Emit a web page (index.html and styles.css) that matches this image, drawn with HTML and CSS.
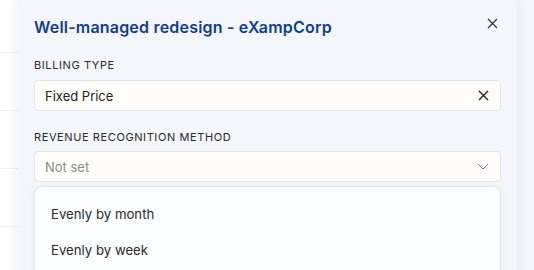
FILE: index.html
```html
<!DOCTYPE html>
<html lang="en">
<head>
    <meta charset="UTF-8">
    <meta name="viewport" content="width=device-width, initial-scale=1.0">
    <title>Well-managed redesign - eXampCorp</title>
    <link rel="stylesheet" href="styles.css">
</head>
<body>
    <div class="backdrop">
        <div class="rows">
            <div class="row"></div>
            <div class="row"></div>
            <div class="row"></div>
            <div class="row"></div>
            <div class="row"></div>
        </div>
    </div>

    <div class="panel">
        <div class="panel-head">
            <h1>Well-managed redesign - eXampCorp</h1>
            <button class="icon-btn close-btn" aria-label="Close">
                <svg width="11" height="11" viewBox="0 0 11 11"><path d="M1 1L10 10M10 1L1 10" stroke="#333" stroke-width="1.2" fill="none"/></svg>
            </button>
        </div>

        <div class="field">
            <label>Billing type</label>
            <div class="input">
                <span>Fixed Price</span>
                <svg width="11" height="11" viewBox="0 0 11 11"><path d="M1 1L10 10M10 1L1 10" stroke="#222" stroke-width="1.4" fill="none"/></svg>
            </div>
        </div>

        <div class="field">
            <label>Revenue recognition method</label>
            <div class="input">
                <span class="placeholder">Not set</span>
                <svg width="12" height="7" viewBox="0 0 12 7"><path d="M1 1L6 6L11 1" stroke="#777" stroke-width="1" fill="none"/></svg>
            </div>
            <ul class="menu">
                <li>Evenly by month</li>
                <li>Evenly by week</li>
            </ul>
        </div>
    </div>
</body>
</html>
```

FILE: styles.css
```css
html, body {
    margin: 0;
    height: 100%;
    overflow: hidden;
}
body {
    font-family: Inter, "Noto Sans", sans-serif;
    background: #f6f7fa;
    position: relative;
    color: #222;
}
.backdrop {
    position: absolute;
    left: 0;
    top: 0;
    width: 30px;
    height: 100%;
    background: #fff;
}
.rows {
    padding-top: 52px;
}
.row {
    height: 57px;
    border-top: 1px solid #eeeff2;
}
.panel {
    position: absolute;
    left: 18px;
    top: -8px;
    width: 499px;
    height: 300px;
    box-sizing: border-box;
    padding: 23px 16px 0 16px;
    background: #f4f6fb;
    border-radius: 12px;
    box-shadow: 0 0 14px rgba(30, 40, 70, 0.08);
}
.panel-head {
    display: flex;
    align-items: center;
    justify-content: space-between;
    height: 24px;
}
h1 {
    margin: 0;
    font-size: 16px;
    font-weight: 600;
    color: #0f3c93;
    letter-spacing: 0.2px;
}
.icon-btn {
    border: none;
    background: none;
    padding: 0;
    display: flex;
    cursor: pointer;
}
.close-btn {
    margin-right: 3px;
    margin-top: -7px;
}
.field {
    margin-top: 19px;
}
.field + .field {
    margin-top: 19px;
}
label {
    display: block;
    font-size: 11px;
    text-transform: uppercase;
    letter-spacing: 0.6px;
    color: #2a2a2a;
    margin-bottom: 8px;
}
.field + .field label {
    margin-bottom: 7px;
}
.input {
    display: flex;
    align-items: center;
    justify-content: space-between;
    height: 31px;
    box-sizing: border-box;
    padding: 0 11px 0 10px;
    background: #fffdfa;
    border: 1px solid #e2e4e9;
    border-radius: 4px;
    font-size: 13px;
}
.placeholder {
    color: #8a8a8a;
}
.menu {
    list-style: none;
    margin: 4px 0 0 0;
    padding: 9px 0;
    background: #fbfcfe;
    border: 1px solid #e2e4e9;
    border-radius: 8px;
    box-shadow: 0 2px 8px rgba(30, 40, 70, 0.06);
}
.menu li {
    padding: 9px 16px;
    font-size: 13.2px;
    color: #2a2a2a;
    line-height: 18px;
}
```
